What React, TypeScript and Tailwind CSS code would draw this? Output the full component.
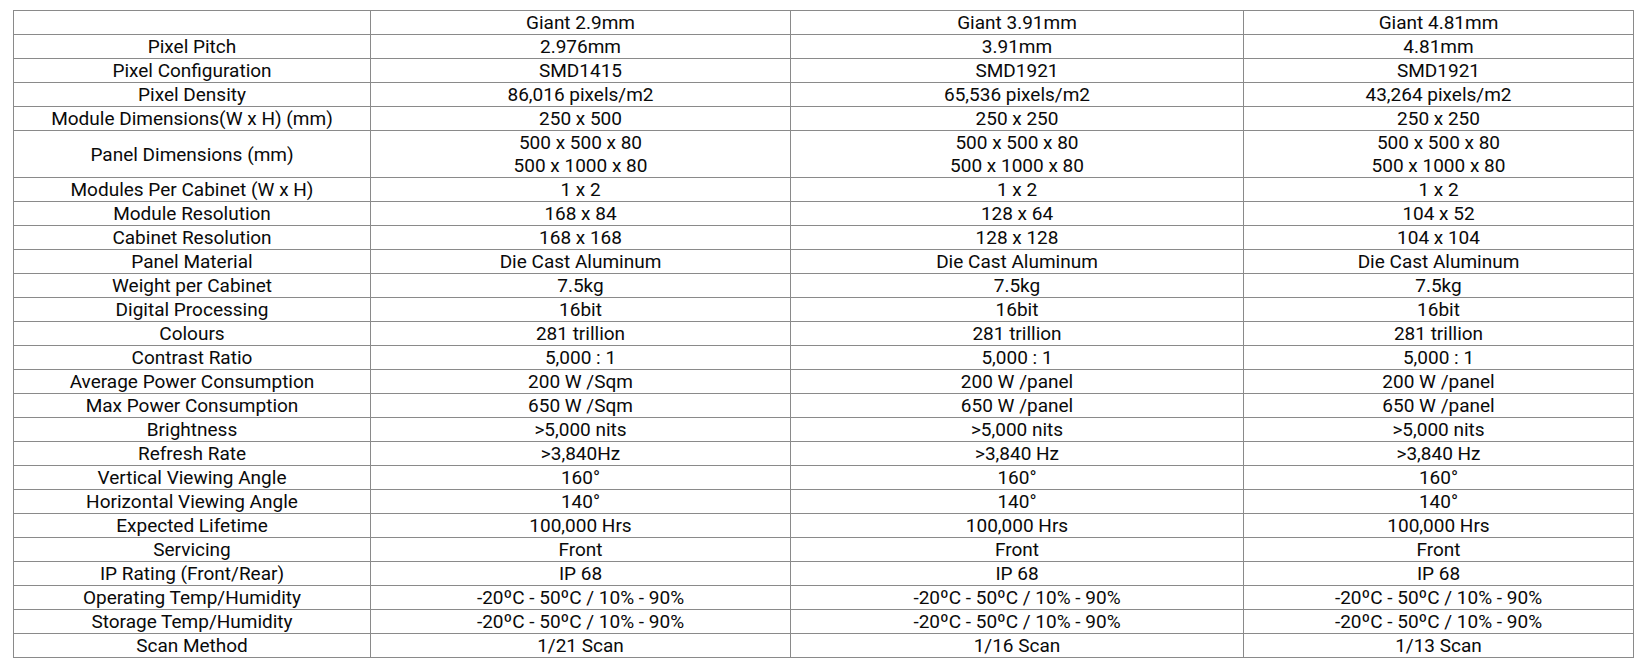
import React from 'react'

type Row = { label: string; values: string[][] }

const rows: Row[] = [
  { label: 'Pixel Pitch', values: [['2.976mm'], ['3.91mm'], ['4.81mm']] },
  { label: 'Pixel Configuration', values: [['SMD1415'], ['SMD1921'], ['SMD1921']] },
  { label: 'Pixel Density', values: [['86,016 pixels/m2'], ['65,536 pixels/m2'], ['43,264 pixels/m2']] },
  { label: 'Module Dimensions(W x H) (mm)', values: [['250 x 500'], ['250 x 250'], ['250 x 250']] },
  {
    label: 'Panel Dimensions (mm)',
    values: [
      ['500 x 500 x 80', '500 x 1000 x 80'],
      ['500 x 500 x 80', '500 x 1000 x 80'],
      ['500 x 500 x 80', '500 x 1000 x 80'],
    ],
  },
  { label: 'Modules Per Cabinet (W x H)', values: [['1 x 2'], ['1 x 2'], ['1 x 2']] },
  { label: 'Module Resolution', values: [['168 x 84'], ['128 x 64'], ['104 x 52']] },
  { label: 'Cabinet Resolution', values: [['168 x 168'], ['128 x 128'], ['104 x 104']] },
  { label: 'Panel Material', values: [['Die Cast Aluminum'], ['Die Cast Aluminum'], ['Die Cast Aluminum']] },
  { label: 'Weight per Cabinet', values: [['7.5kg'], ['7.5kg'], ['7.5kg']] },
  { label: 'Digital Processing', values: [['16bit'], ['16bit'], ['16bit']] },
  { label: 'Colours', values: [['281 trillion'], ['281 trillion'], ['281 trillion']] },
  { label: 'Contrast Ratio', values: [['5,000 : 1'], ['5,000 : 1'], ['5,000 : 1']] },
  { label: 'Average Power Consumption', values: [['200 W /Sqm'], ['200 W /panel'], ['200 W /panel']] },
  { label: 'Max Power Consumption', values: [['650 W /Sqm'], ['650 W /panel'], ['650 W /panel']] },
  { label: 'Brightness', values: [['>5,000 nits'], ['>5,000 nits'], ['>5,000 nits']] },
  { label: 'Refresh Rate', values: [['>3,840Hz'], ['>3,840 Hz'], ['>3,840 Hz']] },
  { label: 'Vertical Viewing Angle', values: [['160°'], ['160°'], ['160°']] },
  { label: 'Horizontal Viewing Angle', values: [['140°'], ['140°'], ['140°']] },
  { label: 'Expected Lifetime', values: [['100,000 Hrs'], ['100,000 Hrs'], ['100,000 Hrs']] },
  { label: 'Servicing', values: [['Front'], ['Front'], ['Front']] },
  { label: 'IP Rating (Front/Rear)', values: [['IP 68'], ['IP 68'], ['IP 68']] },
  {
    label: 'Operating Temp/Humidity',
    values: [['-20ºC - 50ºC / 10% - 90%'], ['-20ºC - 50ºC / 10% - 90%'], ['-20ºC - 50ºC / 10% - 90%']],
  },
  {
    label: 'Storage Temp/Humidity',
    values: [['-20ºC - 50ºC / 10% - 90%'], ['-20ºC - 50ºC / 10% - 90%'], ['-20ºC - 50ºC / 10% - 90%']],
  },
  { label: 'Scan Method', values: [['1/21 Scan'], ['1/16 Scan'], ['1/13 Scan']] },
]

const cell = 'border border-[#8a8a8a] p-0 text-center align-middle leading-[23px]'

export default function App() {
  return (
    <div className="min-h-[670px] bg-white pl-[13px] pt-[10px] font-['Roboto',sans-serif] text-[19px] text-[#0a0a0a]">
      <table className="table-fixed border-collapse w-[1620px]">
        <colgroup>
          <col className="w-[357px]" />
          <col className="w-[420px]" />
          <col className="w-[453px]" />
          <col className="w-[390px]" />
        </colgroup>
        <thead>
          <tr className="h-[24px]">
            <th className={cell + ' font-normal'}></th>
            <th className={cell + ' font-normal'}>Giant 2.9mm</th>
            <th className={cell + ' font-normal'}>Giant 3.91mm</th>
            <th className={cell + ' font-normal'}>Giant 4.81mm</th>
          </tr>
        </thead>
        <tbody>
          {rows.map((r) => (
            <tr key={r.label} className={r.values[0].length > 1 ? 'h-[47px]' : 'h-[24px]'}>
              <td className={cell}>{r.label}</td>
              {r.values.map((v, i) => (
                <td key={i} className={cell}>
                  {v.map((line) => (
                    <div key={line}>{line}</div>
                  ))}
                </td>
              ))}
            </tr>
          ))}
        </tbody>
      </table>
    </div>
  )
}
